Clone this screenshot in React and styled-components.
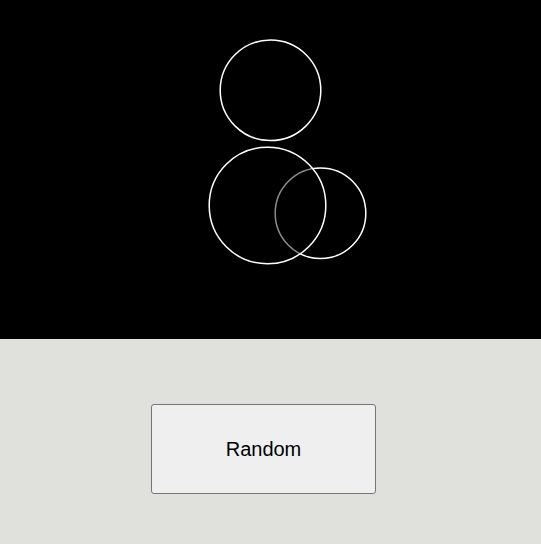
import React from "react";
import styled, { createGlobalStyle } from "styled-components";

const GlobalStyle = createGlobalStyle`
  html, body {
    margin: 0;
    padding: 0;
    background: #e0e0dc;
    font-family: "Liberation Sans", Arial, sans-serif;
  }
`;

const Page = styled.div`
  display: flex;
  flex-direction: column;
  min-height: 544px;
`;

const Stage = styled.svg`
  display: block;
  width: 100%;
  height: 339px;
  background: #000;
`;

const Controls = styled.div`
  display: flex;
  padding: 65px 0 0 151px;
`;

const RandomButton = styled.button`
  width: 225px;
  height: 90px;
  background: #efefef;
  border: 1px solid #767676;
  border-radius: 3px;
  font-family: "Liberation Sans", Arial, sans-serif;
  font-size: 20px;
  color: #000;
  cursor: pointer;
`;

const circles = [
  { cx: 320.5, cy: 213.2, r: 45.3, fill: "none" },
  { cx: 267.5, cy: 205.5, r: 58.3, fill: "rgba(0,0,0,0.45)" },
  { cx: 270.5, cy: 90.3, r: 50.3, fill: "none" },
];

export default function App() {
  return (
    <Page>
      <GlobalStyle />
      <Stage viewBox="0 0 541 339" preserveAspectRatio="xMinYMin meet">
        {circles.map((c, i) => (
          <circle
            key={i}
            cx={c.cx}
            cy={c.cy}
            r={c.r}
            fill={c.fill}
            stroke="#fff"
            strokeWidth="1.5"
          />
        ))}
      </Stage>
      <Controls>
        <RandomButton>Random</RandomButton>
      </Controls>
    </Page>
  );
}
